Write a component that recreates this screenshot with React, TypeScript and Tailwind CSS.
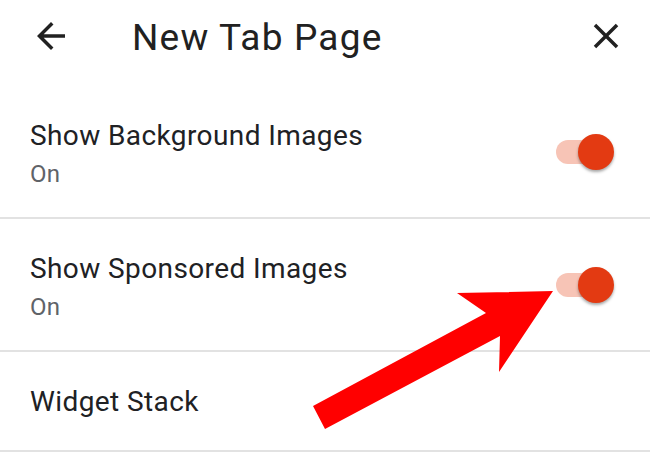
import React from 'react';

type Row = { title: string; sub?: string; on?: boolean };

const rows: Row[] = [
  { title: 'Show Background Images', sub: 'On', on: true },
  { title: 'Show Sponsored Images', sub: 'On', on: true },
  { title: 'Widget Stack' },
];

function Toggle() {
  return (
    <div className="relative w-[58px] h-[36px] flex items-center">
      <div className="w-[52px] h-[24px] rounded-full bg-[#f7c4b6]" />
      <div className="absolute right-0 top-0 w-[36px] h-[36px] rounded-full bg-[#e33a12] shadow-[0_2px_3px_rgba(0,0,0,0.35)]" />
    </div>
  );
}

export default function App() {
  return (
    <div className="relative w-[650px] h-[473px] bg-white overflow-hidden font-['Roboto',sans-serif] text-[#212121]">
      <header className="h-[86px] pt-[15px] pl-[30px] pr-[23px]">
        <div className="flex items-center h-[42px]">
          <svg viewBox="0 0 24 24" className="w-[42px] h-[42px]" fill="#212121">
            <path d="M20 11H7.83l5.59-5.59L12 4l-8 8 8 8 1.41-1.41L7.83 13H20v-2z" />
          </svg>
          <h1 className="ml-[60px] pt-[3px] text-[37px] leading-[42px] tracking-[1.2px] flex-1">New Tab Page</h1>
          <svg viewBox="0 0 24 24" className="w-[42px] h-[42px]" fill="#212121">
            <path d="M19 6.41L17.59 5 12 10.59 6.41 5 5 6.41 10.59 12 5 17.59 6.41 19 12 13.41 17.59 19 19 17.59 13.41 12z" />
          </svg>
        </div>
      </header>

      {rows.map((r) =>
        r.sub ? (
          <div
            key={r.title}
            className="flex items-center justify-between pl-[30px] pr-[36px] pt-[32px] pb-[27px] border-b-2 border-[#e2e2e2]"
          >
            <div>
              <div className="text-[28px] leading-[36px] tracking-[0.4px] text-[#202124]">{r.title}</div>
              <div className="mt-[4px] text-[24px] leading-[32px] tracking-[0.3px] text-[#5f6368]">{r.sub}</div>
            </div>
            <div className="mb-[4px]">
              <Toggle />
            </div>
          </div>
        ) : (
          <div
            key={r.title}
            className="flex items-center h-[100px] pl-[30px] pt-[2px] border-b-2 border-[#e2e2e2]"
          >
            <div className="text-[28px] leading-[36px] tracking-[0.4px] text-[#202124]">{r.title}</div>
          </div>
        )
      )}

      <svg className="absolute inset-0 pointer-events-none" width="650" height="473" viewBox="0 0 650 473">
        <polygon points="553,291 457,293 486,313 313,406 325,429 500,336 499,372" fill="#ff0000" />
      </svg>
    </div>
  );
}
